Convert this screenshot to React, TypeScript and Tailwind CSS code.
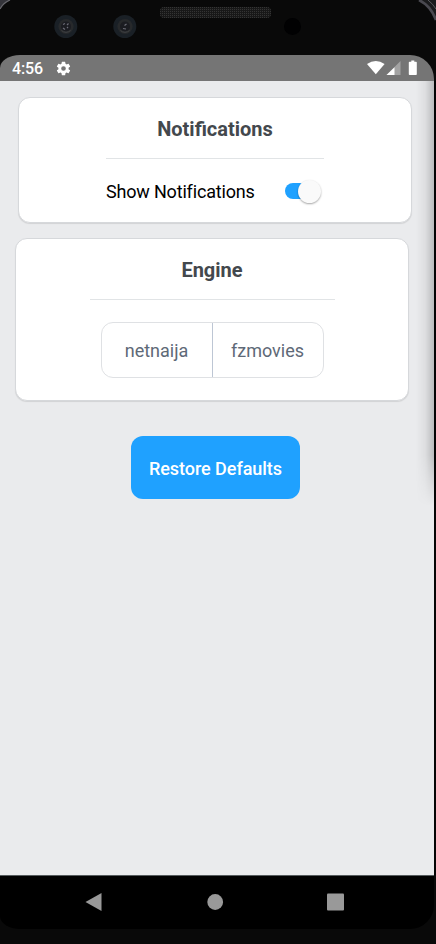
import type { ReactNode } from 'react';

function Camera({ glint }: { glint: string }) {
  return (
    <svg width="24" height="24" viewBox="0 0 24 24">
      <circle cx="11.8" cy="12.5" r="11.5" fill="#1a2026" />
      <circle cx="12" cy="12.5" r="7.6" fill="#27292b" />
      <circle cx="12" cy="12.5" r="5" fill="#1b1c21" />
      <path d={glint} stroke="#6c6c76" strokeWidth="1.2" fill="none" />
      <path d="M7.5 16.5a6.5 6.5 0 0 0 9 0" stroke="#404245" fill="none" />
    </svg>
  );
}

function Bezel() {
  return (
    <header className="relative h-[55px] bg-[#090909]">
      <div className="flex h-[55px] items-start pl-[54px]">
        <div className="mt-[14px] flex gap-[35px]">
          <Camera glint="M9 10.5l2-1M14.5 9.5l-1.5 1.5M9 14l2 1.5M13 14l1-1" />
          <Camera glint="M11.5 11.5l2-1.5M10 14.5l3 .5" />
        </div>
        <svg className="mt-[7px] ml-[23px]" width="111" height="11" viewBox="0 0 111 11">
          <defs>
            <pattern id="mesh" width="2" height="2" patternUnits="userSpaceOnUse">
              <rect width="2" height="2" fill="#181818" />
              <rect width="1" height="1" fill="#343434" />
            </pattern>
          </defs>
          <rect width="111" height="11" rx="4" fill="url(#mesh)" />
        </svg>
        <div className="mt-[18px] ml-[13px] h-[17px] w-[17px] rounded-full bg-[#010102]" />
      </div>
      <svg className="absolute top-0 left-0" width="12" height="12" viewBox="0 0 12 12">
        <path d="M0 0H9Q3 3 0 9z" fill="#34343a" />
        <path d="M10 0Q3 3 0 9" stroke="#67676c" strokeWidth="1.2" fill="none" />
      </svg>
      <svg className="absolute top-0 right-0" width="18" height="24" viewBox="0 0 18 24">
        <path d="M2 0Q13 6 18 20V0z" fill="#1b1b1d" />
        <path d="M1 0Q13 6 18 20" stroke="#4a4950" strokeWidth="2.6" fill="none" />
        <path d="M10 0Q15 4 18 9" stroke="#5c5c60" fill="none" />
      </svg>
    </header>
  );
}

function StatusBar() {
  return (
    <div className="bg-[#090909] pr-[2px]">
      <div className="flex h-[26px] items-center rounded-tl-[20px_13px] rounded-tr-[24px] bg-[#757575] pr-[16px] pl-[12px] text-white">
        <span className="w-[42.5px] pt-[2px] text-[16px] leading-[26px] font-medium tracking-[-0.1px]">4:56</span>
        <svg width="17" height="17" viewBox="0 0 24 24" fill="currentColor">
          <path d="M19.14 12.94c.04-.3.06-.61.06-.94 0-.32-.02-.64-.07-.94l2.03-1.58a.49.49 0 0 0 .12-.61l-1.92-3.32a.49.49 0 0 0-.59-.22l-2.39.96a7.03 7.03 0 0 0-1.62-.94l-.36-2.54a.48.48 0 0 0-.48-.41h-3.84a.47.47 0 0 0-.47.41l-.36 2.54c-.59.24-1.13.57-1.62.94l-2.39-.96a.48.48 0 0 0-.59.22L2.74 8.87a.47.47 0 0 0 .12.61l2.03 1.58c-.05.3-.09.63-.09.94s.02.64.07.94l-2.03 1.58a.49.49 0 0 0-.12.61l1.92 3.32c.12.22.37.29.59.22l2.39-.96c.5.38 1.03.7 1.62.94l.36 2.54c.05.24.24.41.48.41h3.84c.24 0 .44-.17.47-.41l.36-2.54a6.8 6.8 0 0 0 1.62-.94l2.39.96c.22.08.47 0 .59-.22l1.92-3.32a.47.47 0 0 0-.12-.61zM12 15.3a3.3 3.3 0 1 1 0-6.6 3.3 3.3 0 0 1 0 6.6z" />
        </svg>
        <svg className="ml-auto" width="51" height="16" viewBox="0 0 51 16">
          <path d="M0 4Q8.8-2.2 17.6 4L8.8 14.3z" fill="#fff" />
          <path d="M33.5 1V15H19.5z" fill="#a3a3a3" />
          <path d="M27.5 7.2V15H19.5z" fill="#fff" />
          <path d="M44.3.5h3v1.2h1.7q.8 0 .8.8v11.7q0 .8-.8.8h-6.4q-.8 0-.8-.8V2.5q0-.8.8-.8h1.7z" fill="#fff" />
        </svg>
      </div>
    </div>
  );
}

function Card({ title, className, rule, children }: { title: string; className: string; rule: string; children: ReactNode }) {
  return (
    <section className={`flex w-[394px] flex-col items-center rounded-[12px] border border-[#d6d8db] bg-white shadow-[0_1px_1px_rgba(0,0,0,0.1)] ${className}`}>
      <h2 className="mt-[19px] text-[20px] leading-[24px] font-bold text-[#43484d]">{title}</h2>
      <div className={`mt-[17px] h-px bg-[#e1e4e6] ${rule}`} />
      {children}
    </section>
  );
}

function Toggle() {
  return (
    <div className="mr-[3px] flex h-[24px] w-[36px] items-center">
      <div className="h-[16px] w-[26px] rounded-full bg-[#1fa1ff]" />
      <div className="-ml-[13px] h-[23px] w-[23px] shrink-0 rounded-full bg-[#fafafa] shadow-[0_1px_2px_rgba(0,0,0,0.35)]" />
    </div>
  );
}

function NavBar() {
  return (
    <nav className="h-[69px] bg-[#090909] pr-[2px]">
      <div className="flex h-[54px] items-center rounded-br-[24px] rounded-bl-[20px_13px] border-t border-[#555b5d] bg-black pb-[2px] pl-[85px]">
        <svg width="260" height="20" viewBox="0 0 260 20" fill="#999">
          <path d="M16.5 1v18L.5 10z" />
          <circle cx="130.2" cy="10" r="7.9" />
          <rect x="242" y="1.5" width="17" height="17" rx="1" />
        </svg>
      </div>
    </nav>
  );
}

export default function App() {
  return (
    <div className="h-[944px] w-[436px] overflow-hidden bg-[#050505] font-[Roboto,sans-serif]">
      <Bezel />
      <StatusBar />
      <main className="relative mr-[2px] flex h-[794px] flex-col items-start bg-[#eaebed]">
        <Card title="Notifications" className="mt-4 ml-[18px] h-[126px]" rule="w-[218px]">
          <div className="mt-[19px] flex w-[218px] items-center justify-between">
            <span className="pt-[2px] text-[18px] leading-[24px] tracking-[-0.18px] whitespace-nowrap text-black">Show Notifications</span>
            <Toggle />
          </div>
        </Card>
        <Card title="Engine" className="mt-[15px] ml-[15px] h-[163px]" rule="w-[245px]">
          <div className="mt-[22px] flex h-[56px] w-[223px] rounded-[12px] border border-[#dfe1e4] text-[18px] text-[#5e6977]">
            <button className="w-[111px] border-r border-[#bdc6d4]">netnaija</button>
            <button className="flex-1">fzmovies</button>
          </div>
        </Card>
        <button className="mt-[35px] ml-[131px] h-[63px] w-[169px] rounded-[12px] bg-[#1fa1ff] pt-[2px] text-[18px] font-medium tracking-[-0.05px] text-white">
          Restore Defaults
        </button>
        <div className="pointer-events-none absolute top-0 right-0 h-[425px] w-[18px] bg-linear-to-l from-black/20 via-black/5 to-transparent [mask-image:linear-gradient(to_bottom,black_88%,transparent)]" />
      </main>
      <NavBar />
    </div>
  );
}
